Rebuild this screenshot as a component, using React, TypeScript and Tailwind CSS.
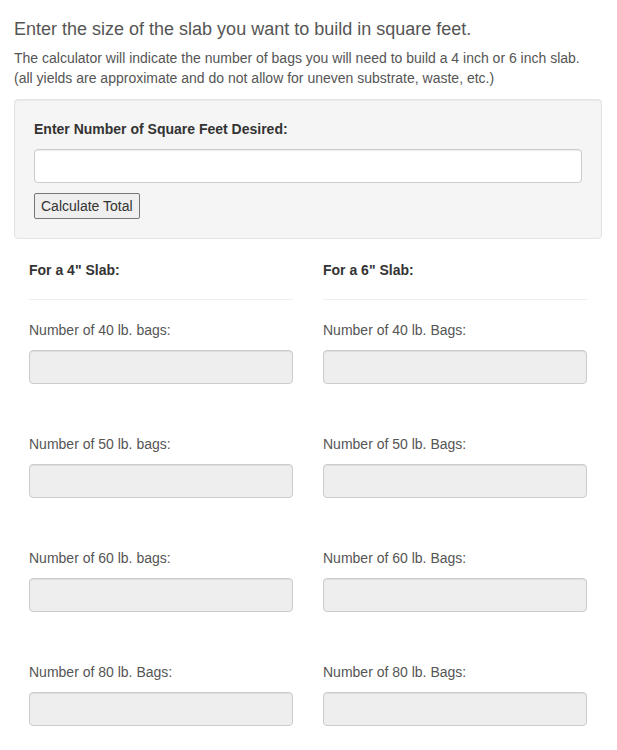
import React from "react";

const rows = [
  { left: "Number of 40 lb. bags:", right: "Number of 40 lb. Bags:" },
  { left: "Number of 50 lb. bags:", right: "Number of 50 lb. Bags:" },
  { left: "Number of 60 lb. bags:", right: "Number of 60 lb. Bags:" },
  { left: "Number of 80 lb. Bags:", right: "Number of 80 lb. Bags:" },
];

const ResultColumn: React.FC<{ title: string; labels: string[] }> = ({ title, labels }) => (
  <div className="px-[15px]">
    <div className="text-[14px] leading-[20px] font-bold text-[#333]">{title}</div>
    <hr className="mt-[19px] border-0 border-t border-[#eee]" />
    {labels.map((label, i) => (
      <div key={i} className={i === 0 ? "mt-[20px]" : "mt-[50px]"}>
        <div className="text-[14px] leading-[20px] text-[#555]">{label}</div>
        <div className="mt-[10px] h-[34px] rounded-[4px] border border-[#ccc] bg-[#eee] shadow-[inset_0_1px_1px_rgba(0,0,0,0.075)]" />
      </div>
    ))}
  </div>
);

export default function App() {
  return (
    <div className="min-h-[750px] bg-white pl-[14px] pr-[15px] pt-[19px] font-['Liberation_Sans',Arial,sans-serif] text-[#555]">
      <h4 className="text-[18px] leading-[20px] text-[#555]">
        Enter the size of the slab you want to build in square feet.
      </h4>
      <p className="mt-[9px] text-[14px] leading-[20px] text-[#555]">
        The calculator will indicate the number of bags you will need to build a 4 inch or 6 inch slab.
        <br />
        (all yields are approximate and do not allow for uneven substrate, waste, etc.)
      </p>

      <div className="mt-[11px] rounded-[4px] border border-[#e3e3e3] bg-[#f5f5f5] p-[19px] shadow-[inset_0_1px_1px_rgba(0,0,0,0.05)]">
        <div className="text-[14px] leading-[20px] font-bold text-[#333]">
          Enter Number of Square Feet Desired:
        </div>
        <input
          type="text"
          className="mt-[10px] block h-[34px] w-full rounded-[4px] border border-[#ccc] bg-white px-3 text-[14px] shadow-[inset_0_1px_1px_rgba(0,0,0,0.075)] outline-none"
        />
        <button
          type="button"
          className="mt-[10px] block h-[26px] rounded-[2px] border border-[#767676] bg-[#efefef] px-[6px] text-[14px] leading-[20px] text-[#333]"
        >
          Calculate Total
        </button>
      </div>

      <div className="mt-[21px] grid grid-cols-2">
        <ResultColumn title={'For a 4" Slab:'} labels={rows.map((r) => r.left)} />
        <ResultColumn title={'For a 6" Slab:'} labels={rows.map((r) => r.right)} />
      </div>
    </div>
  );
}
